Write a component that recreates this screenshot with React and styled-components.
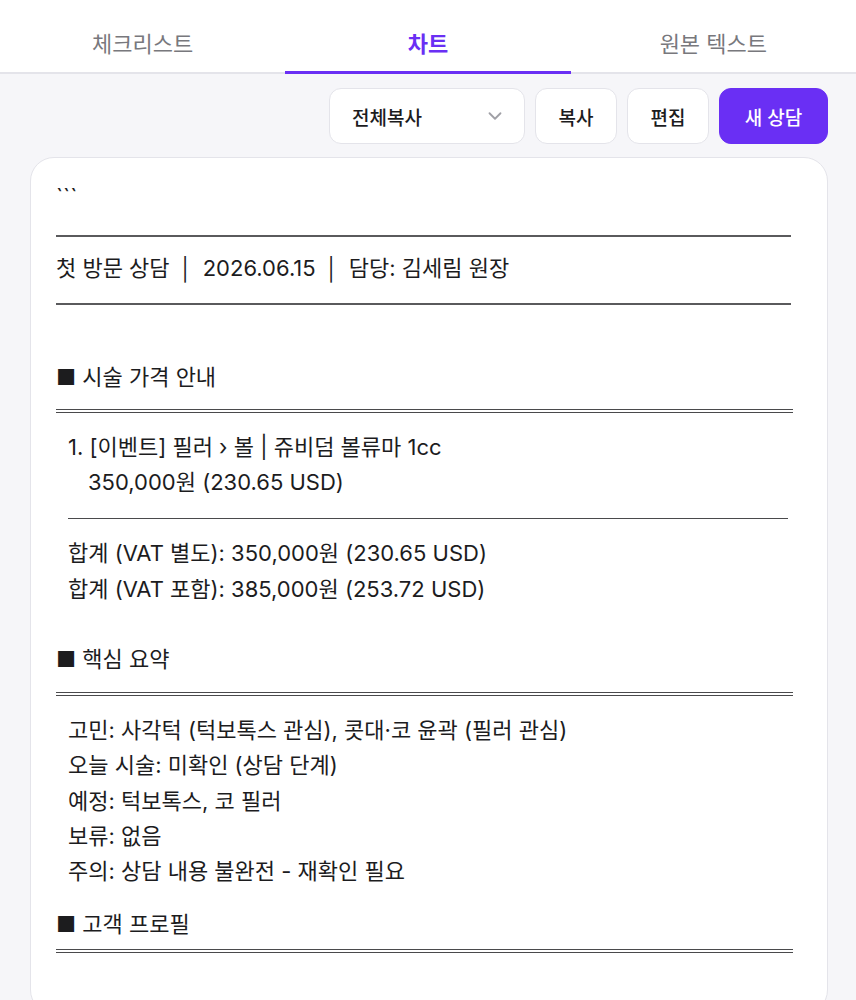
import React from "react";
import styled, { createGlobalStyle } from "styled-components";

const Global = createGlobalStyle`
  html, body { margin: 0; padding: 0; background: #f6f6f9; }
  body { font-family: "Inter", "Noto Sans CJK KR", sans-serif; color: #1c1c1e; -webkit-font-smoothing: antialiased; }
  * { box-sizing: border-box; }
`;

const PURPLE = "#6a2ff4";

const Page = styled.div`
  width: 856px;
  min-height: 1000px;
  background: #f6f6f9;
`;

const TabBar = styled.div`
  display: flex;
  background: #fff;
  border-bottom: 2px solid #e4e4ea;
  height: 74px;
`;

const Tab = styled.div`
  flex: 1;
  display: flex;
  align-items: center;
  justify-content: center;
  font-size: 22px;
  font-weight: ${(p) => (p.$active ? 700 : 400)};
  color: ${(p) => (p.$active ? PURPLE : "#78787d")};
  padding-top: 12px;
  margin-bottom: -2px;
  border-bottom: 3px solid ${(p) => (p.$active ? PURPLE : "transparent")};
`;

const Main = styled.div`
  padding: 14px 28px 0 30px;
`;

const Toolbar = styled.div`
  display: flex;
  justify-content: flex-end;
  gap: 10px;
  margin-bottom: 13px;
`;

const Button = styled.button`
  height: 56px;
  padding: 0 18px;
  border-radius: 12px;
  border: 1px solid ${(p) => (p.$primary ? PURPLE : "#e4e4ea")};
  background: ${(p) => (p.$primary ? PURPLE : "#fff")};
  color: ${(p) => (p.$primary ? "#fff" : "#1c1c1e")};
  font-family: inherit;
  font-size: 19px;
  font-weight: 500;
  display: flex;
  align-items: center;
  justify-content: center;
  min-width: ${(p) => p.$w || 0}px;
`;

const Select = styled.div`
  width: 196px;
  height: 56px;
  border-radius: 12px;
  border: 1px solid #e4e4ea;
  background: #fff;
  display: flex;
  align-items: center;
  justify-content: space-between;
  padding: 0 18px 0 22px;
  font-size: 19px;
  font-weight: 500;
`;

const Card = styled.div`
  background: #fff;
  border: 1px solid #e4e4ea;
  border-radius: 24px;
  padding: 22px 34px 60px 25px;
  font-size: 22px;
`;

const TextLine = styled.div`
  line-height: 35.25px;
  white-space: pre;
  padding-left: ${(p) => p.$indent || 0}px;
  margin-top: ${(p) => p.$mt || 0}px;
`;

const Rule = styled.div`
  height: 0;
  margin-top: ${(p) => p.$mt || 0}px;
  margin-left: ${(p) => p.$ml || 0}px;
  margin-right: ${(p) => p.$mr || 0}px;
  border-top: ${(p) =>
    p.$double ? "4px double #4a4a4c" : p.$thin ? "1.5px solid #4a4a4c" : "2px solid #5a5a5c"};
`;

const Bar = styled.span`
  font-family: "DejaVu Sans", sans-serif;
  font-weight: 300;
  margin: 0 3.5px;
`;

export default function App() {
  return (
    <Page>
      <Global />
      <TabBar>
        <Tab>체크리스트</Tab>
        <Tab $active>차트</Tab>
        <Tab>원본 텍스트</Tab>
      </TabBar>
      <Main>
        <Toolbar>
          <Select>
            <span>전체복사</span>
            <svg width="22" height="22" viewBox="0 0 24 24" fill="none" stroke="#a0a0a6" strokeWidth="2" strokeLinecap="round" strokeLinejoin="round">
              <path d="M6 9l6 6 6-6" />
            </svg>
          </Select>
          <Button $w={82}>복사</Button>
          <Button $w={82}>편집</Button>
          <Button $primary $w={109}>새 상담</Button>
        </Toolbar>
        <Card>
          <TextLine>```</TextLine>
          <Rule $mt={20} $mr={2} />
          <TextLine $mt={14}>첫 방문 상담 <Bar>│</Bar> 2026.06.15 <Bar>│</Bar> 담당: 김세림 원장</TextLine>
          <Rule $mt={16} $mr={2} />
          <TextLine $mt={55}>■ 시술 가격 안내</TextLine>
          <Rule $double $mt={14} />
          <TextLine $mt={17} $indent={12}>1. [이벤트] 필러 › 볼 | 쥬비덤 볼류마 1cc</TextLine>
          <TextLine $indent={32}>350,000원 (230.65 USD)</TextLine>
          <Rule $thin $mt={18} $ml={12} $mr={5} />
          <TextLine $mt={17} $indent={12}>합계 (VAT 별도): 350,000원 (230.65 USD)</TextLine>
          <TextLine $indent={12}>합계 (VAT 포함): 385,000원 (253.72 USD)</TextLine>
          <TextLine $mt={35}>■ 핵심 요약</TextLine>
          <Rule $double $mt={15} />
          <TextLine $mt={17} $indent={12}>고민: 사각턱 (턱보톡스 관심), 콧대·코 윤곽 (필러 관심)</TextLine>
          <TextLine $indent={12}>오늘 시술: 미확인 (상담 단계)</TextLine>
          <TextLine $indent={12}>예정: 턱보톡스, 코 필러</TextLine>
          <TextLine $indent={12}>보류: 없음</TextLine>
          <TextLine $indent={12}>주의: 상담 내용 불완전 - 재확인 필요</TextLine>
          <TextLine $mt={18}>■ 고객 프로필</TextLine>
          <Rule $double $mt={6} />
        </Card>
      </Main>
    </Page>
  );
}
